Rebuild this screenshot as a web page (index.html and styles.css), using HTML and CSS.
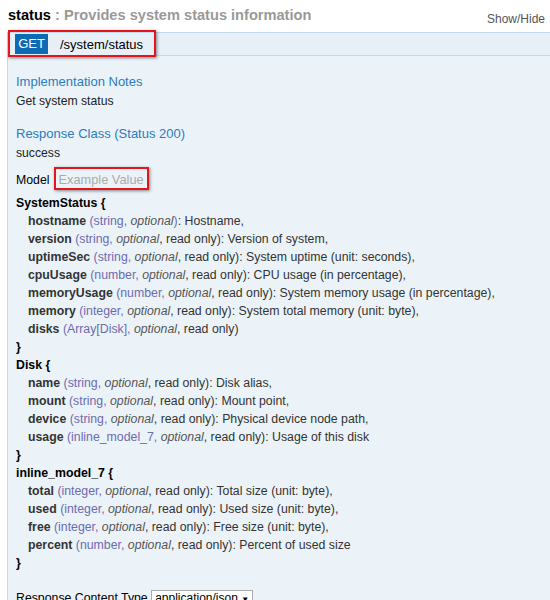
FILE: index.html
```html
<!DOCTYPE html>
<html>
<head>
<meta charset="utf-8">
<link rel="stylesheet" href="styles.css">
</head>
<body>
<div class="top">
  <h2 class="title"><span class="name">status</span><span class="desc"> : Provides system status information</span></h2>
  <a class="toggle">Show/Hide</a>
</div>
<div class="op">
  <div class="op-head">
    <span class="method">GET</span>
    <span class="path">/system/status</span>
    <div class="mark mark-head"></div>
  </div>
  <div class="op-body">
    <h4 class="sec">Implementation Notes</h4>
    <p class="txt">Get system status</p>
    <h4 class="sec sec2">Response Class (Status 200)</h4>
    <p class="txt">success</p>
    <div class="tabs"><span class="tab-on">Model</span><span class="tab-off">Example Value<span class="mark mark-tab"></span></span></div>
    <div class="model">
      <div class="mname">SystemStatus {</div>
      <div class="prop"><b>hostname</b> <span class="pt">(string, </span><i>optional</i><span class="pt">)</span>: Hostname,</div>
      <div class="prop"><b>version</b> <span class="pt">(string, </span><i>optional</i>, read only): Version of system,</div>
      <div class="prop"><b>uptimeSec</b> <span class="pt">(string, </span><i>optional</i>, read only): System uptime (unit: seconds),</div>
      <div class="prop"><b>cpuUsage</b> <span class="pt">(number, </span><i>optional</i>, read only): CPU usage (in percentage),</div>
      <div class="prop"><b>memoryUsage</b> <span class="pt">(number, </span><i>optional</i>, read only): System memory usage (in percentage),</div>
      <div class="prop"><b>memory</b> <span class="pt">(integer, </span><i>optional</i>, read only): System total memory (unit: byte),</div>
      <div class="prop"><b>disks</b> <span class="pt">(Array[Disk], </span><i>optional</i>, read only)</div>
      <div class="mname">}</div>
      <div class="mname">Disk {</div>
      <div class="prop"><b>name</b> <span class="pt">(string, </span><i>optional</i>, read only): Disk alias,</div>
      <div class="prop"><b>mount</b> <span class="pt">(string, </span><i>optional</i>, read only): Mount point,</div>
      <div class="prop"><b>device</b> <span class="pt">(string, </span><i>optional</i>, read only): Physical device node path,</div>
      <div class="prop"><b>usage</b> <span class="pt">(inline_model_7, </span><i>optional</i>, read only): Usage of this disk</div>
      <div class="mname">}</div>
      <div class="mname">inline_model_7 {</div>
      <div class="prop"><b>total</b> <span class="pt">(integer, </span><i>optional</i>, read only): Total size (unit: byte),</div>
      <div class="prop"><b>used</b> <span class="pt">(integer, </span><i>optional</i>, read only): Used size (unit: byte),</div>
      <div class="prop"><b>free</b> <span class="pt">(integer, </span><i>optional</i>, read only): Free size (unit: byte),</div>
      <div class="prop"><b>percent</b> <span class="pt">(number, </span><i>optional</i>, read only): Percent of used size</div>
      <div class="mname">}</div>
    </div>
    <div class="ctype">Response Content Type <span class="select">application/json <span class="arr">▼</span></span></div>
  </div>
</div>
</body>
</html>
```
FILE: styles.css
```css
html, body { margin: 0; padding: 0; background: #fff; }
body { font-family: "Liberation Sans", Arial, sans-serif; color: #333; font-size: 13px; }
.top { display: flex; justify-content: space-between; align-items: flex-end; padding: 0 5px 0 8px; height: 32px; }
.title { margin: 0 0 7px; font-size: 14.6px; font-weight: bold; line-height: 20px; }
.title .name { color: #000; }
.title .desc { color: #999; }
.toggle { font-size: 12px; color: #555; margin-bottom: 6px; }
.op { margin-left: 7px; }
.op-head { position: relative; display: flex; align-items: center; height: 22px; background: #e7f0f7; border-top: 1px solid #c3d9ec; border-bottom: 1px solid #c3d9ec; border-left: 1px solid #c3d9ec; padding-left: 7px; }
.method { background: #0f6ab4; color: #fff; font-size: 13px; width: 33px; height: 20px; line-height: 20px; text-align: center; }
.path { color: #000; font-size: 13px; margin-left: 12px; }
.mark { position: absolute; border: 2px solid #e8141b; box-shadow: 1px 1px 3px rgba(0,0,0,0.45); }
.mark-head { left: 0; top: -3px; width: 144px; height: 23px; }
.op-body { background: #ebf3f9; border-left: 1px solid #c3d9ec; padding: 17px 8px 0; height: 600px; }
.sec { margin: 0; font-size: 13px; font-weight: normal; color: #2a7bbf; line-height: 18px; }
.sec2 { margin-top: 15px; }
.txt { margin: 1px 0 0; font-size: 12.2px; line-height: 18px; color: #222; }
.tabs { margin-top: 10px; font-size: 12.3px; line-height: 16px; position: relative; }
.tab-on { color: #000; }
.tab-off { color: #aaa; margin-left: 9px; font-size: 12.8px; position: relative; }
.mark-tab { left: -5px; top: -5px; width: 91px; height: 19px; }
.model { margin-top: 6px; font-size: 12.3px; line-height: 18px; color: #333; }
.mname { font-weight: bold; color: #000; }
.prop { padding-left: 12px; }
.prop b { color: #333; }
.pt { color: #6b6bb0; }
.prop i { color: #555; }
.ctype { margin-top: 18px; font-size: 12.3px; color: #000; }
.select { display: inline-block; border: 1px solid #aaa; background: #fff; padding: 0 3px; font-size: 12px; }
.arr { font-size: 8px; }
```
